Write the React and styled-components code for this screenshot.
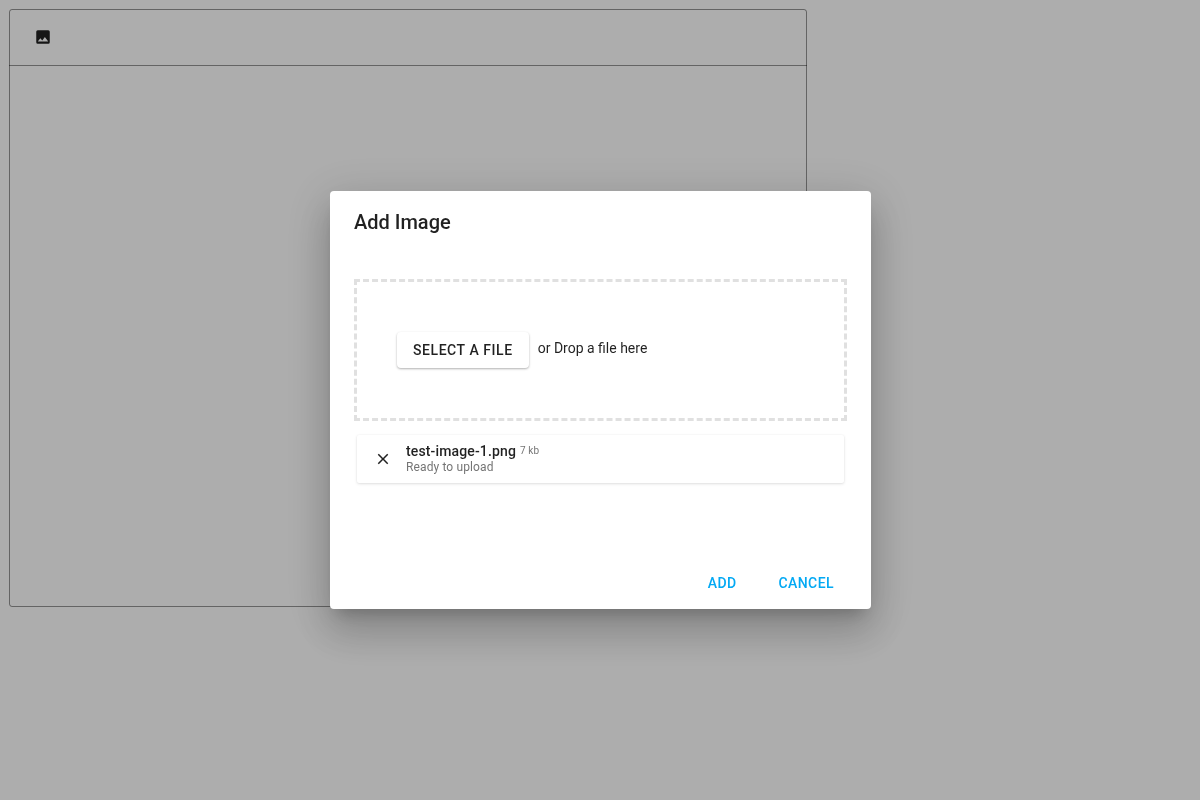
import React from "react";
import styled, { createGlobalStyle } from "styled-components";

const GlobalStyle = createGlobalStyle`
  * { box-sizing: border-box; }
  body {
    margin: 0;
    background: #fff;
    color: rgba(0, 0, 0, 0.87);
    font-family: Roboto, sans-serif;
    font-size: 14px;
  }
`;

const Page = styled.main`
  min-height: 100vh;
  padding: 9px;
`;

const Editor = styled.section`
  display: flex;
  flex-direction: column;
  width: 100%;
  max-width: 798px;
  min-height: 598px;
  border: 1px solid rgba(0, 0, 0, 0.42);
  border-radius: 3px;
`;

const Toolbar = styled.header`
  display: flex;
  align-items: center;
  height: 56px;
  margin: 0 -1px;
  padding: 0 25px 1px;
  border-bottom: 1px solid rgba(0, 0, 0, 0.42);
`;

const IconButton = styled.button`
  display: flex;
  padding: 0;
  border: 0;
  background: none;
  color: #212121;
  cursor: pointer;
`;

const Scrim = styled.div`
  position: fixed;
  inset: 0;
  display: flex;
  align-items: center;
  justify-content: center;
  padding-left: 1px;
  background: rgba(0, 0, 0, 0.32);
`;

const Dialog = styled.section`
  display: flex;
  flex-direction: column;
  width: 100%;
  max-width: 541px;
  background: #fff;
  border-radius: 4px;
  box-shadow: 0 11px 15px -7px rgba(0, 0, 0, 0.2),
    0 24px 38px 3px rgba(0, 0, 0, 0.14), 0 9px 46px 8px rgba(0, 0, 0, 0.12);
`;

const Title = styled.h2`
  margin: 0;
  padding: 15px 24px 17px;
  font-size: 20px;
  line-height: 32px;
  font-weight: 500;
`;

const Content = styled.div`
  display: flex;
  flex-direction: column;
  gap: 14px;
  padding: 24px 24px 74px;
`;

const DropZone = styled.div`
  display: flex;
  align-items: center;
  gap: 9px;
  height: 142px;
  padding: 0 40px;
  border: 3px dashed #e0e0e0;
`;

const Hint = styled.span`
  padding-bottom: 4px;
  line-height: 20px;
`;

const Button = styled.button`
  height: 36px;
  padding: 0 ${(p) => (p.$raised ? 16 : 8)}px;
  border: 0;
  border-radius: 4px;
  background: ${(p) => (p.$raised ? "#fff" : "transparent")};
  color: ${(p) => (p.$raised ? "rgba(0, 0, 0, 0.87)" : "#03a9f4")};
  box-shadow: ${(p) =>
    p.$raised
      ? "0 1px 3px rgba(0, 0, 0, 0.12), 0 1px 2px rgba(0, 0, 0, 0.2)"
      : "none"};
  font: 500 14px/36px Roboto, sans-serif;
  letter-spacing: ${(p) => (p.$raised ? "0.04em" : "0.03em")};
  text-transform: uppercase;
  cursor: pointer;
`;

const FileRow = styled.div`
  display: flex;
  align-items: center;
  gap: 14px;
  height: 48px;
  margin: 0 3px;
  padding: 0 17px;
  border-radius: 2px;
  box-shadow: 0 1px 3px rgba(0, 0, 0, 0.12), 0 0 2px rgba(0, 0, 0, 0.05);
`;

const FileName = styled.div`
  display: flex;
  align-items: center;
  gap: 4px;
  font-weight: 500;
  letter-spacing: 0.01em;
  line-height: 16px;
`;

const FileSize = styled.span`
  color: #757575;
  font-size: 10px;
  font-weight: 400;
`;

const FileStatus = styled.div`
  color: #757575;
  font-size: 12px;
  letter-spacing: 0.01em;
  line-height: 16px;
`;

const Actions = styled.footer`
  display: flex;
  justify-content: flex-end;
  gap: 26px;
  padding: 8px 29px;
`;

export default function App() {
  return (
    <>
      <GlobalStyle />
      <Page>
        <Editor>
          <Toolbar>
            <IconButton aria-label="Insert image">
              <svg width="18" height="18" viewBox="0 0 24 24" fill="currentColor">
                <path d="M21 19V5a2 2 0 0 0-2-2H5a2 2 0 0 0-2 2v14a2 2 0 0 0 2 2h14a2 2 0 0 0 2-2zM8.500 13.500l2.500 3 3.500-4.500 4.500 6H5z" />
              </svg>
            </IconButton>
          </Toolbar>
        </Editor>
      </Page>
      <Scrim>
        <Dialog role="dialog" aria-modal="true" aria-labelledby="dialog-title">
          <Title id="dialog-title">Add Image</Title>
          <Content>
            <DropZone>
              <Button $raised>Select a file</Button>
              <Hint>or Drop a file here</Hint>
            </DropZone>
            <FileRow>
              <IconButton aria-label="Remove file">
                <svg width="18" height="18" viewBox="0 0 24 24" fill="currentColor">
                  <path d="M19 6.410 17.590 5 12 10.590 6.410 5 5 6.410 10.590 12 5 17.590 6.410 19 12 13.410 17.590 19 19 17.590 13.410 12z" />
                </svg>
              </IconButton>
              <div>
                <FileName>
                  test-image-1.png <FileSize>7 kb</FileSize>
                </FileName>
                <FileStatus>Ready to upload</FileStatus>
              </div>
            </FileRow>
          </Content>
          <Actions>
            <Button>Add</Button>
            <Button>Cancel</Button>
          </Actions>
        </Dialog>
      </Scrim>
    </>
  );
}
